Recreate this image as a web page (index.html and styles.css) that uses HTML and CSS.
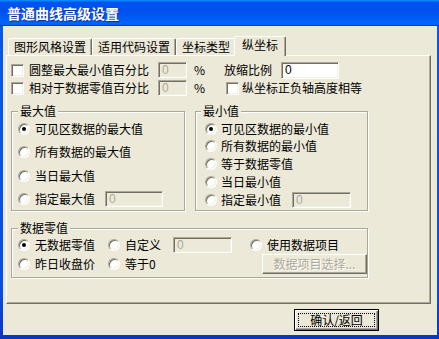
FILE: index.html
```html
<!DOCTYPE html>
<html lang="zh-CN">
<head>
<meta charset="utf-8">
<title>普通曲线高级设置</title>
<link rel="stylesheet" href="styles.css">
</head>
<body>
<div class="window">
  <div class="titlebar"><span class="title">普通曲线高级设置</span></div>
  <div class="client">
    <div class="tabs">
      <div class="tab">图形风格设置</div>
      <div class="tab">适用代码设置</div>
      <div class="tab">坐标类型</div>
      <div class="tab active">纵坐标</div>
    </div>
    <div class="panel">
      <div class="row">
        <span class="check"></span>
        <span class="label w-long">圆整最大最小值百分比</span>
        <span class="field disabled w-pct">0</span>
        <span class="pct">%</span>
        <span class="label w-scale">放缩比例</span>
        <span class="field w-scale-in">0</span>
      </div>
      <div class="row">
        <span class="check"></span>
        <span class="label w-long">相对于数据零值百分比</span>
        <span class="field disabled w-pct">0</span>
        <span class="pct pct2">%</span>
        <span class="check"></span>
        <span class="label ml3">纵坐标正负轴高度相等</span>
      </div>
      <div class="groups">
        <fieldset class="group g-max">
          <legend>最大值</legend>
          <div class="radios">
            <div class="opt"><span class="radio on"></span>可见区数据的最大值</div>
            <div class="opt"><span class="radio"></span>所有数据的最大值</div>
            <div class="opt"><span class="radio"></span>当日最大值</div>
            <div class="opt"><span class="radio"></span><span class="w-spec">指定最大值</span><span class="field disabled spec-max">0</span></div>
          </div>
        </fieldset>
        <fieldset class="group g-min">
          <legend>最小值</legend>
          <div class="radios">
            <div class="opt"><span class="radio on"></span>可见区数据的最小值</div>
            <div class="opt"><span class="radio"></span>所有数据的最小值</div>
            <div class="opt"><span class="radio"></span>等于数据零值</div>
            <div class="opt"><span class="radio"></span>当日最小值</div>
            <div class="opt"><span class="radio"></span><span class="w-spec">指定最小值</span><span class="field disabled spec-min">0</span></div>
          </div>
        </fieldset>
      </div>
      <fieldset class="group g-zero">
        <legend>数据零值</legend>
        <div class="zero-grid">
          <div class="opt"><span class="radio on"></span>无数据零值</div>
          <div class="opt"><span class="radio"></span>自定义</div>
          <div class="cell"><span class="field disabled custom-in">0</span></div>
          <div class="opt"><span class="radio"></span>使用数据项目</div>
          <div class="opt"><span class="radio"></span>昨日收盘价</div>
          <div class="opt"><span class="radio"></span>等于0</div>
          <div class="cell"></div>
          <div class="cell"><span class="btn disabled-btn">数据项目选择...</span></div>
        </div>
      </fieldset>
    </div>
    <div class="footer">
      <button class="btn-default"><span class="focus">确认/返回</span></button>
    </div>
  </div>
</div>
</body>
</html>
```
FILE: styles.css
```css
* { box-sizing: border-box; }
html, body { margin: 0; padding: 0; }
body {
  width: 439px;
  height: 339px;
  overflow: hidden;
  font-family: "Noto Sans CJK SC", "Noto Sans", sans-serif;
  font-size: 12px;
  color: #000;
}
.window {
  width: 439px;
  height: 339px;
  display: flex;
  flex-direction: column;
  background: linear-gradient(to bottom, #0B58EC 0%, #0A4FE0 85%, #0936C4 100%);
}
.titlebar {
  height: 26px;
  flex: none;
  display: flex;
  align-items: center;
  padding-left: 7px;
  background: linear-gradient(to bottom, #0997FF 0%, #0053EE 9%, #0050EE 40%, #0062FA 85%, #0064FF 92%, #005BFF 95%, #003DD7 97%, #003DD7 100%);
}
.title {
  color: #fff;
  font-size: 14px;
  font-weight: bold;
  line-height: 16px;
  text-shadow: 1px 1px 0 #0A2FA0;
}
.client {
  flex: 1;
  margin: 0 2px 4px 3px;
  background: #ECE9D8;
  display: flex;
  flex-direction: column;
}
.tabs {
  display: flex;
  align-items: flex-end;
  height: 19px;
  margin: 10px 0 0 5px;
  position: relative;
  z-index: 1;
}
.tab {
  height: 17px;
  padding: 0 5px;
  line-height: 16px;
  white-space: nowrap;
  border: 1px solid;
  border-bottom: none;
  border-color: #fff #716F64 transparent #fff;
  border-radius: 2px 2px 0 0;
  box-shadow: inset -1px 0 0 #ACA899;
  background: #ECE9D8;
}
.tab.active {
  height: 20px;
  margin: 0 -2px -1px -2px;
  padding: 0 7px;
  line-height: 15px;
  position: relative;
  z-index: 2;
}
.panel {
  margin-left: 3px;
  width: 425px;
  height: 249px;
  flex: none;
  border: 1px solid;
  border-color: #fff #716F64 #716F64 #fff;
  box-shadow: inset -1px -1px 0 #ACA899;
  padding: 5px 0 0 4px;
}
.row {
  display: flex;
  align-items: center;
  height: 18px;
  white-space: nowrap;
}
.check {
  width: 13px;
  height: 13px;
  flex: none;
  background: #fff;
  border: 1px solid;
  border-color: #ACA899 #fff #fff #ACA899;
  box-shadow: inset 1px 1px 0 #716F64, inset -1px -1px 0 #F1EFE2;
}
.label { line-height: 14px; }
.w-long { margin-left: 5px; width: 129px; }
.w-scale { width: 57px; }
.ml3 { margin-left: 3px; }
.pct { margin-left: 7px; width: 30px; line-height: 14px; }
.pct2 { width: 32px; }
.field {
  display: inline-block;
  flex: none;
  height: 17px;
  line-height: 13px;
  padding: 1px 0 0 3px;
  background: #fff;
  border: 1px solid;
  border-color: #ACA899 #fff #fff #ACA899;
  box-shadow: inset 1px 1px 0 #716F64, inset -1px -1px 0 #F1EFE2;
  font-family: "Liberation Sans", sans-serif;
  font-size: 12px;
}
.field.disabled {
  background: #ECE9D8;
  color: #ACA899;
  height: 16px;
}
.w-pct { width: 29px; }
.w-scale-in { width: 58px; }
.groups {
  display: flex;
  gap: 10px;
  margin-top: 7px;
}
.group {
  margin: 0;
  min-width: 0;
  border: 1px solid #ACA899;
  box-shadow: inset 1px 1px 0 #fff, 1px 1px 0 #fff;
}
.group legend {
  padding: 0 2px;
  line-height: 14px;
  background: #ECE9D8;
}
.g-max {
  width: 174px;
  height: 107px;
  padding: 2px 0 2px 6px;
}
.g-min {
  width: 173px;
  height: 107px;
  padding: 2px 0 2px 9px;
}
.g-min legend { margin-left: -4px; }
.radios {
  height: 88px;
  display: flex;
  flex-direction: column;
  justify-content: space-between;
}
.opt {
  display: flex;
  align-items: center;
  height: 17px;
  line-height: 14px;
  white-space: nowrap;
}
.radio {
  position: relative;
  width: 12px;
  height: 12px;
  flex: none;
  margin-right: 5px;
  border-radius: 50%;
  background: #fff;
  border: 1px solid;
  border-color: #ACA899 #fff #fff #ACA899;
  box-shadow: inset 1px 1px 0 #716F64, inset -1px -1px 0 #F1EFE2;
}
.g-min .radio { margin-right: 4px; }
.radio.on::after {
  content: "";
  position: absolute;
  left: 3px;
  top: 3px;
  width: 4px;
  height: 4px;
  border-radius: 50%;
  background: #000;
}
.w-spec { width: 60px; }
.spec-max { margin-left: 10px; width: 58px; height: 17px; }
.spec-min { margin-left: 11px; width: 59px; height: 17px; }
.g-zero {
  margin-top: 10px;
  margin-left: 0;
  width: 357px;
  height: 57px;
  padding: 1px 0 3px 6px;
}
.zero-grid {
  display: grid;
  grid-template-columns: 90px 65px 77px 1fr;
  grid-template-rows: 18px 20px;
}
.zero-grid .opt { height: auto; }
.cell { display: flex; align-items: center; }
.custom-in { width: 59px; height: 17px; }
.btn {
  display: inline-flex;
  align-items: center;
  justify-content: center;
  white-space: nowrap;
}
.disabled-btn {
  margin-left: 12px;
  width: 105px;
  height: 20px;
  color: #ACA899;
  text-shadow: 1px 1px 0 #fff;
  border: 1px solid;
  border-color: #fff #716F64 #716F64 #fff;
  box-shadow: inset -1px -1px 0 #ACA899;
  line-height: 14px;
}
.footer {
  display: flex;
  padding-left: 291px;
  margin-top: 5px;
}
.btn-default {
  width: 85px;
  height: 22px;
  padding: 3px;
  margin: 0;
  font: inherit;
  color: #000;
  background: #ECE9D8;
  border: 1px solid #000;
  box-shadow: inset 1px 1px 0 #fff, inset -1px -1px 0 #716F64, inset -2px -2px 0 #ACA899;
  display: flex;
}
.focus {
  flex: 1;
  display: flex;
  align-items: center;
  justify-content: center;
  border: 1px dotted #000;
  line-height: 12px;
}
```
